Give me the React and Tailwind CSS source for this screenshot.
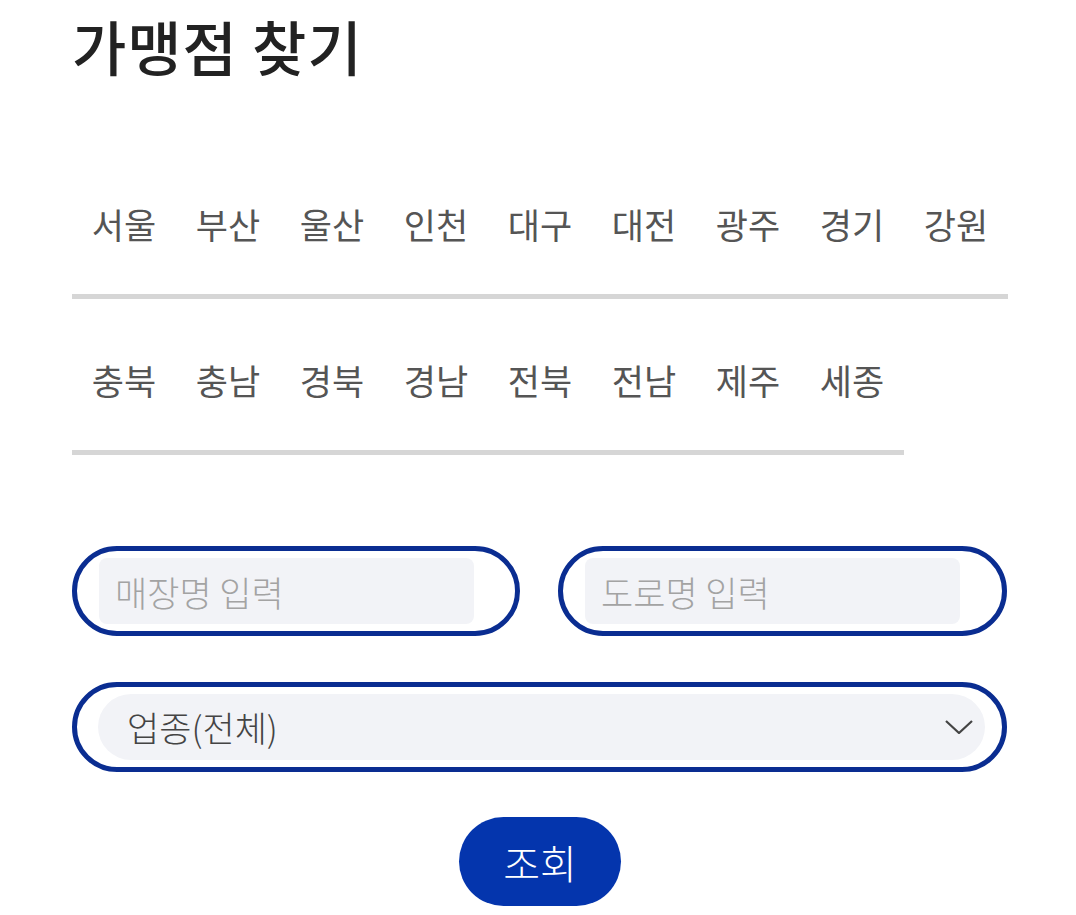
import React from 'react';

const font = { fontFamily: '"Noto Sans CJK KR", "Noto Sans", sans-serif' };

const row1 = ["서울", "부산", "울산", "인천", "대구", "대전", "광주", "경기", "강원"];
const row2 = ["충북", "충남", "경북", "경남", "전북", "전남", "제주", "세종"];

const Tab = ({ label }) => (
    <div className="w-[104px] border-b-[5px] border-[#d6d6d6] pt-[63px] pb-[52px] text-center text-[35px] leading-[36px] font-normal text-[#555555]">
        {label}
    </div>
);

const App = () => {
    return (
        <div className="min-h-screen bg-white pl-[72px] pr-[68px]" style={font}>
            <h1 className="pt-[10px] text-[59px] leading-[72px] font-medium text-[#222222] tracking-[1px]">가맹점 찾기</h1>

            {/* 지역 탭 */}
            <div className="mt-[61px] flex">
                {row1.map(r => <Tab key={r} label={r} />)}
            </div>
            <div className="flex">
                {row2.map(r => <Tab key={r} label={r} />)}
            </div>

            {/* 검색 폼 */}
            <div className="mt-[91px] flex gap-[38px]">
                <div className="flex h-[90px] w-[448px] items-center rounded-full border-[5px] border-[#0a2d91] pl-[22px] pr-[41px]">
                    <input
                        className="h-[66px] w-full rounded-[8px] bg-[#f2f3f7] px-[16px] text-[35px] font-light text-[#444] placeholder-[#a3a3a3] outline-none"
                        placeholder="매장명 입력"
                        style={font}
                    />
                </div>
                <div className="flex h-[90px] w-[449px] items-center rounded-full border-[5px] border-[#0a2d91] pl-[22px] pr-[42px]">
                    <input
                        className="h-[66px] w-full rounded-[8px] bg-[#f2f3f7] px-[16px] text-[35px] font-light text-[#444] placeholder-[#a3a3a3] outline-none"
                        placeholder="도로명 입력"
                        style={font}
                    />
                </div>
            </div>

            <div className="mt-[46px] flex h-[90px] w-[935px] items-center rounded-full border-[5px] border-[#0a2d91] pl-[21px] pr-[17px]">
                <div className="flex h-[66px] w-full items-center justify-between rounded-full bg-[#f2f3f7] pl-[29px] pr-[12px]">
                    <span className="text-[35px] font-light text-[#444444]">업종(전체)</span>
                    <svg width="28" height="14" viewBox="0 0 28 14" fill="none">
                        <path d="M1 1 L14 13 L27 1" stroke="#444444" strokeWidth="2.2" />
                    </svg>
                </div>
            </div>

            <div className="mt-[45px] flex justify-center">
                <button className="h-[89px] w-[162px] rounded-full bg-[#0435ad] text-[40px] font-light text-white" style={font}>
                    조회
                </button>
            </div>
        </div>
    );
};

export default App;
